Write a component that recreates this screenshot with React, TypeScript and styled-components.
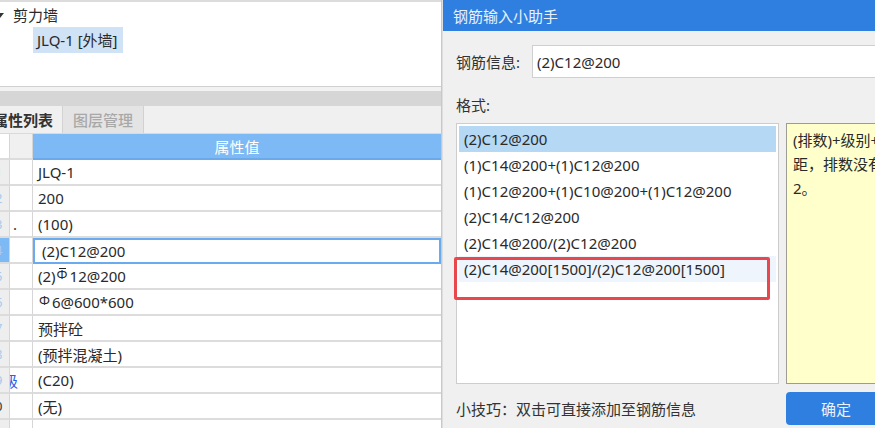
import styled, { createGlobalStyle } from "styled-components";

const GlobalStyle = createGlobalStyle`
  html, body {
    margin: 0;
    padding: 0;
    background: #ffffff;
  }
  body {
    font-family: "Noto Sans", "Noto Sans CJK SC", sans-serif;
    font-size: 15px;
    color: #2a2a2a;
  }
`;

const Screen = styled.div`
  display: flex;
  width: 875px;
  height: 428px;
  overflow: hidden;
`;

/* ---------- left: tree + property grid ---------- */

const LeftPanel = styled.div`
  width: 441px;
  flex-shrink: 0;
  display: flex;
  flex-direction: column;
  overflow: hidden;
  border-right: 1px solid #c8c8c8;
  background: #ffffff;
  & > * {
    flex-shrink: 0;
  }
`;

const Tree = styled.div`
  height: 87px;
  border-top: 2px solid #dcdcdc;
  border-bottom: 1px solid #d0d0d0;
  padding-top: 1px;
  box-sizing: border-box;
`;

const TreeNode = styled.div<{ $depth: number }>`
  display: flex;
  align-items: center;
  height: ${p => (p.$depth === 0 ? 24 : 26)}px;
  padding-left: ${p => (p.$depth === 0 ? 0 : 33)}px;
`;

const Caret = styled.span`
  width: 0;
  height: 0;
  margin-left: -4px;
  margin-right: 5px;
  border-left: 4px solid transparent;
  border-right: 4px solid transparent;
  border-top: 5px solid #333;
`;

const TreeLabel = styled.span<{ $selected?: boolean }>`
  padding: 0 5px 0 4px;
  background: ${p => (p.$selected ? "#cfe2f6" : "transparent")};
  line-height: 26px;
`;

const Splitter = styled.div`
  height: 19px;
  border-top: 4px solid #f2f2f2;
  background: #d6d6d6;
  box-sizing: border-box;
`;

const TabBar = styled.div`
  display: flex;
  height: 27px;
  background: #f0f0f0;
  border-bottom: 1px solid #dadada;
`;

const Tab = styled.div<{ $active?: boolean }>`
  display: flex;
  align-items: center;
  padding: ${p => (p.$active ? "0 9px 0 10px" : "0 10px")};
  margin-left: ${p => (p.$active ? "-17px" : "0")};
  font-weight: ${p => (p.$active ? 700 : 500)};
  color: ${p => (p.$active ? "#333" : "#a8a8a8")};
  background: ${p => (p.$active ? "#f0f0f0" : "#e4e4e4")};
  border-right: 1px solid #d2d2d2;
`;

const Grid = styled.div`
  display: grid;
  grid-template-columns: 10px 23px 1fr;
  grid-auto-rows: 26px;
`;

const Cell = styled.div<{ $kind: "index" | "name" | "value"; $header?: boolean; $selected?: boolean }>`
  display: flex;
  align-items: center;
  overflow: hidden;
  white-space: nowrap;
  box-sizing: border-box;
  border-bottom: 2px solid #dcdcdc;
  border-right: ${p => (p.$kind === "value" ? "none" : "1px solid #d6d6d6")};
  padding-left: ${p => (p.$kind === "value" ? 5 : 0)}px;
  background: ${p =>
    p.$kind === "index"
      ? p.$selected
        ? "#7db9f5"
        : p.$header
        ? "#ffffff"
        : "#eeeeee"
      : p.$kind === "name" && p.$header
      ? "#f0f0f0"
      : "#ffffff"};
`;

const HeaderValue = styled.div`
  display: flex;
  align-items: center;
  justify-content: center;
  background: #7db9f5;
  color: #ffffff;
  font-size: 15px;
  border-bottom: 2px solid #6aa9ea;
  box-sizing: border-box;
`;

const EditCell = styled.div`
  display: flex;
  align-items: center;
  box-sizing: border-box;
  border: 2px solid #6aabf0;
  padding-left: 7px;
  background: #fff;
`;

const RowNo = styled.span<{ $dark?: boolean }>`
  margin-left: -5px;
  color: ${p => (p.$dark ? "#333" : "#a9c9ec")};
  font-size: 13px;
`;

const NameFrag = styled.span<{ $blue?: boolean }>`
  margin-left: ${p => (p.$blue ? "-7px" : "3px")};
  color: ${p => (p.$blue ? "#2a62e0" : "#333")};
`;

const Rebar = styled.span<{ $grade: 1 | 3 }>`
  position: relative;
  display: inline-block;
  font-size: 13px;
  transform: translateY(-2px);
  margin: 0 2px 0 1px;
  &::before {
    content: "";
    display: ${p => (p.$grade === 3 ? "block" : "none")};
    position: absolute;
    left: 2px;
    right: 2px;
    top: 3px;
    height: 1px;
    background: #222;
  }
`;

/* ---------- right: dialog ---------- */

const Dialog = styled.div`
  width: 520px;
  flex-shrink: 0;
  display: flex;
  flex-direction: column;
  background: #f0f0f0;
  border-left: 1px solid #dedede;
`;

const TitleBar = styled.div`
  height: 31px;
  display: flex;
  align-items: center;
  padding-left: 10px;
  background: #2e7fe0;
  color: #e9f1fc;
  font-size: 15px;
`;

const DialogBody = styled.div`
  display: flex;
  flex-direction: column;
  padding: 14px 0 0 13px;
`;

const FieldRow = styled.div`
  display: flex;
  align-items: center;
  gap: 8px;
`;

const Label = styled.span`
  width: 68px;
  color: #333;
`;

const TextInput = styled.div`
  flex: 1;
  height: 33px;
  display: flex;
  align-items: center;
  padding-left: 4px;
  background: #fff;
  border: 1px solid #cfcfcf;
  box-sizing: border-box;
`;

const SectionLabel = styled.div`
  margin: 16px 0 8px;
  color: #333;
`;

const FormatArea = styled.div`
  display: flex;
  gap: 7px;
  height: 261px;
`;

const FormatList = styled.div`
  position: relative;
  width: 323px;
  padding: 2px;
  background: #fff;
  border: 1px solid #cdcdcd;
  box-sizing: border-box;
`;

const FormatItem = styled.div<{ $state?: "selected" | "hover" }>`
  height: 26px;
  display: flex;
  align-items: center;
  padding-left: 5px;
  white-space: nowrap;
  background: ${p =>
    p.$state === "selected" ? "#b5d8f4" : p.$state === "hover" ? "#eef5fc" : "transparent"};
`;

const Highlight = styled.div`
  position: absolute;
  left: -3px;
  top: 133px;
  width: 316px;
  height: 43px;
  border: 3px solid #e8484d;
  border-radius: 2px;
  box-sizing: border-box;
`;

const Hint = styled.div`
  flex: 1;
  padding: 4px 6px;
  background: #ffffcc;
  border: 1px solid #9c9c92;
  line-height: 24px;
  color: #2a2a2a;
  white-space: nowrap;
`;

const Footer = styled.div`
  display: flex;
  align-items: center;
  margin-top: 8px;
  height: 33px;
`;

const Tip = styled.span`
  width: 330px;
  color: #333;
`;

const OkButton = styled.button`
  width: 100px;
  height: 33px;
  border: none;
  border-radius: 4px;
  background: #2e7fe0;
  color: #eaf2fd;
  font-family: inherit;
  font-size: 15px;
`;

const rows: { idx: string; name?: React.ReactNode; value: React.ReactNode; selected?: boolean }[] = [
  { idx: "1", value: "JLQ-1" },
  { idx: "2", value: "200" },
  { idx: "3", name: <NameFrag>.</NameFrag>, value: "(100)" },
  { idx: "4", value: "(2)C12@200", selected: true },
  { idx: "5", value: <>(2)<Rebar $grade={3}>Φ</Rebar>12@200</> },
  { idx: "6", value: <><Rebar $grade={1}>Φ</Rebar>6@600*600</> },
  { idx: "7", value: "预拌砼" },
  { idx: "8", value: "(预拌混凝土)" },
  { idx: "9", name: <NameFrag $blue>级</NameFrag>, value: "(C20)" },
  { idx: "0", value: "(无)" },
  { idx: "", value: "" },
];

const formats = [
  "(2)C12@200",
  "(1)C14@200+(1)C12@200",
  "(1)C12@200+(1)C10@200+(1)C12@200",
  "(2)C14/C12@200",
  "(2)C14@200/(2)C12@200",
  "(2)C14@200[1500]/(2)C12@200[1500]",
];

export default function App() {
  return (
    <>
      <GlobalStyle />
      <Screen>
        <LeftPanel>
          <Tree>
            <TreeNode $depth={0}>
              <Caret />
              <TreeLabel>剪力墙</TreeLabel>
            </TreeNode>
            <TreeNode $depth={1}>
              <TreeLabel $selected>JLQ-1 [外墙]</TreeLabel>
            </TreeNode>
          </Tree>
          <Splitter />
          <TabBar>
            <Tab $active>属性列表</Tab>
            <Tab>图层管理</Tab>
          </TabBar>
          <Grid>
            <Cell $kind="index" $header />
            <Cell $kind="name" $header />
            <HeaderValue>属性值</HeaderValue>
            {rows.map((r, i) => (
              <Row key={i} {...r} />
            ))}
          </Grid>
        </LeftPanel>
        <Dialog>
          <TitleBar>钢筋输入小助手</TitleBar>
          <DialogBody>
            <FieldRow>
              <Label>钢筋信息:</Label>
              <TextInput>(2)C12@200</TextInput>
            </FieldRow>
            <SectionLabel>格式:</SectionLabel>
            <FormatArea>
              <FormatList>
                {formats.map((f, i) => (
                  <FormatItem key={f} $state={i === 0 ? "selected" : i === 5 ? "hover" : undefined}>
                    {f}
                  </FormatItem>
                ))}
                <Highlight />
              </FormatList>
              <Hint>
                (排数)+级别+直径@间
                <br />
                距，排数没有时默认为
                <br />
                2。
              </Hint>
            </FormatArea>
            <Footer>
              <Tip>小技巧：双击可直接添加至钢筋信息</Tip>
              <OkButton>确定</OkButton>
            </Footer>
          </DialogBody>
        </Dialog>
      </Screen>
    </>
  );
}

function Row({ idx, name, value, selected }: { idx: string; name?: React.ReactNode; value: React.ReactNode; selected?: boolean }) {
  return (
    <>
      <Cell $kind="index" $selected={selected}>
        <RowNo $dark={idx === "0"}>{idx}</RowNo>
      </Cell>
      <Cell $kind="name">{name}</Cell>
      {selected ? <EditCell>{value}</EditCell> : <Cell $kind="value">{value}</Cell>}
    </>
  );
}
